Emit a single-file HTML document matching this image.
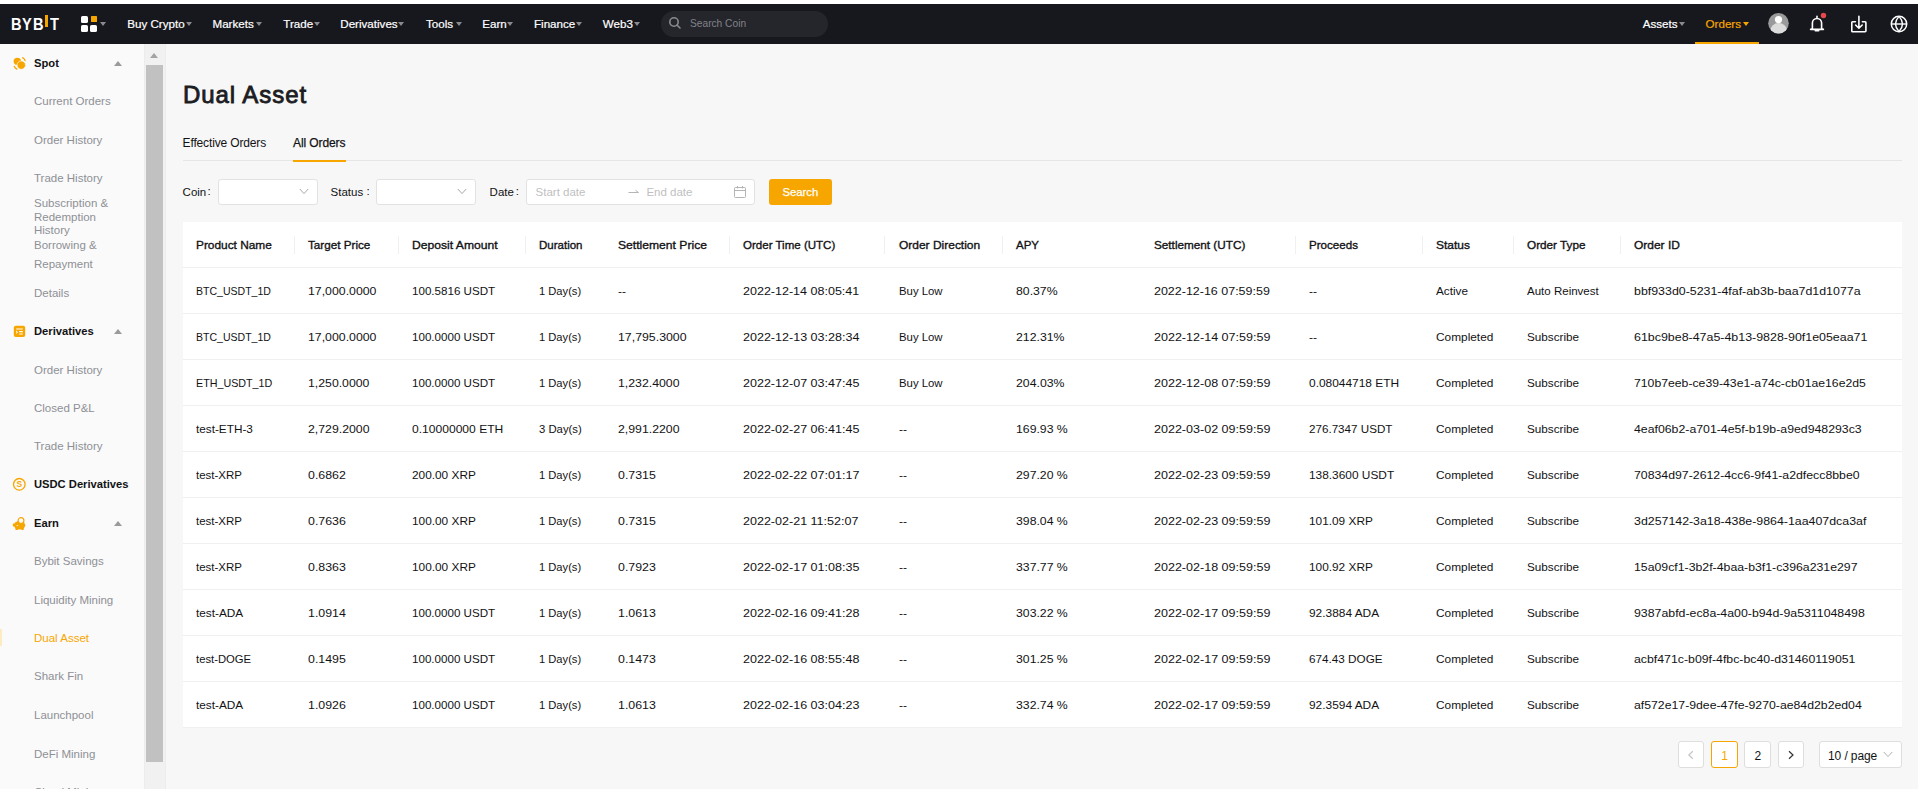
<!DOCTYPE html>
<html><head><meta charset="utf-8">
<style>
*{box-sizing:border-box;margin:0;padding:0}
html,body{width:1918px;height:789px;overflow:hidden;background:#fff;font-family:"Liberation Sans",sans-serif;color:#121214}
.abs{position:absolute;white-space:nowrap}
#hdr{position:absolute;left:0;top:4px;width:1918px;height:40px;background:#17181e}
.nav{position:absolute;top:12.2px;font-size:11.6px;color:#fff;line-height:16px;-webkit-text-stroke:0.2px #fff}
.tri{position:absolute;width:0;height:0;margin-left:-0.2px;border-left:3.3px solid transparent;border-right:3.3px solid transparent;border-top:4.5px solid #8a8b90}
#side{position:absolute;left:0;top:44px;width:144px;height:745px;background:#fafafa;overflow:hidden}
#track{position:absolute;left:144px;top:44px;width:22px;height:745px;background:#f1f1f1;box-shadow:inset 1px 0 0 #ececec, inset -1px 0 0 #ececec}
#thumb{position:absolute;left:146px;top:65px;width:17px;height:697px;background:#c1c1c1}
#main{position:absolute;left:166px;top:44px;width:1752px;height:745px;background:#f7f7f7}
.si{position:absolute;left:34px;font-size:11.5px;color:#8e9096;line-height:14px}
.sh{position:absolute;left:34px;font-size:11.2px;font-weight:700;color:#121214;line-height:14px}
.stri{position:absolute;left:114px;width:0;height:0;border-left:4.5px solid transparent;border-right:4.5px solid transparent;border-bottom:5px solid #9a9a9a}
.lg{top:12.4px;font-size:17px;font-weight:700;color:#fff;line-height:17px;transform:scaleX(0.86);transform-origin:0 0}
.act{color:#f7a600}
.box{background:#fff;border:1px solid #e2e2e2;border-radius:3px}
.th{top:222.8px;font-size:11.8px;line-height:45px;font-weight:400;color:#121214;-webkit-text-stroke:0.35px #121214;transform-origin:0 50%}
.td{font-size:11.2px;line-height:46px;color:#121214;transform-origin:0 50%}
.pg{top:741.4px;height:26.4px;background:#fff;border:1px solid #dedede;border-radius:3px}
</style></head><body>
<div id="hdr">
 <div class="abs lg" style="left:10.9px">B</div><div class="abs lg" style="left:22.4px">Y</div><div class="abs lg" style="left:33px">B</div>
 <div class="abs" style="left:45px;top:11.2px;width:3px;height:12.3px;background:#f7a600"></div>
 <div class="abs lg" style="left:50.2px">T</div>
 <div class="abs" style="left:81.3px;top:12.2px;width:6.9px;height:6.7px;background:#fff;border-radius:1.6px"></div>
 <div class="abs" style="left:90.9px;top:11.7px;width:6.3px;height:6.4px;background:#f7a600;border-radius:0.6px"></div>
 <div class="abs" style="left:81.3px;top:20.7px;width:6.9px;height:6.9px;background:#fff;border-radius:1.6px"></div>
 <div class="abs" style="left:89.8px;top:20.7px;width:6.8px;height:6.9px;background:#fff;border-radius:1.6px"></div>
 <div class="tri" style="left:100.5px;top:18px"></div>
 <div class="nav" style="left:127.3px">Buy Crypto</div><div class="tri" style="left:186.6px;top:18px"></div>
<div class="nav" style="left:212.5px">Markets</div><div class="tri" style="left:256.5px;top:18px"></div>
<div class="nav" style="left:283.3px">Trade</div><div class="tri" style="left:314px;top:18px"></div>
<div class="nav" style="left:340.3px">Derivatives</div><div class="tri" style="left:398.5px;top:18px"></div>
<div class="nav" style="left:426px">Tools</div><div class="tri" style="left:456px;top:18px"></div>
<div class="nav" style="left:482.3px">Earn</div><div class="tri" style="left:507.5px;top:18px"></div>
<div class="nav" style="left:534px">Finance</div><div class="tri" style="left:576.5px;top:18px"></div>
<div class="nav" style="left:602.8px">Web3</div><div class="tri" style="left:634.5px;top:18px"></div>
<div class="nav" style="left:1642.8px">Assets</div><div class="tri" style="left:1679.6px;top:18px"></div>
<div class="nav" style="left:1705.6px;color:#f7a600;-webkit-text-stroke:0.2px #f7a600">Orders</div><div class="tri" style="left:1743px;top:18px;border-top-color:#f7a600"></div>

 <div class="abs" style="left:661px;top:7px;width:167px;height:26px;border-radius:13px;background:#25262c"></div>
 <svg class="abs" style="left:668px;top:12px" width="14" height="14" viewBox="0 0 14 14"><circle cx="6" cy="6" r="4.2" fill="none" stroke="#8a8b90" stroke-width="1.6"/><line x1="9.2" y1="9.2" x2="12" y2="12" stroke="#8a8b90" stroke-width="1.6" stroke-linecap="round"/></svg>
 <div class="abs" style="left:690px;top:13px;font-size:10.2px;color:#81838a;line-height:14px">Search Coin</div>
 <div class="abs" style="left:1695px;top:38px;width:64px;height:2px;background:#f7a600"></div>
 <svg class="abs" style="left:1760px;top:0px" width="158" height="36" viewBox="1760 4 158 36">
  <defs><clipPath id="av"><circle cx="1778.5" cy="23.3" r="10.3"/></clipPath></defs>
  <circle cx="1778.5" cy="23.3" r="10.3" fill="#9a9a9a"/>
  <g clip-path="url(#av)"><ellipse cx="1778.7" cy="31.5" rx="8.6" ry="8.5" fill="#dcdcdc"/></g>
  <circle cx="1778.5" cy="19.6" r="3.6" fill="#fff"/>
  <path d="M1812.4 28.4 V23 a4.6 4.6 0 0 1 9.2 0 V28.4 Q1822 29.2 1823.4 29.4 H1810.6 Q1812 29.2 1812.4 28.4 M1815.3 30.8 h3.4 M1817 16.2 v1.6" fill="none" stroke="#fff" stroke-width="1.6" stroke-linecap="round" stroke-linejoin="round"/>
  <circle cx="1823.5" cy="15.5" r="2.7" fill="#e8484c"/>
  <path d="M1855.4 21.8 H1852.6 a0.8 0.8 0 0 0 -0.8 0.8 V30.9 a0.8 0.8 0 0 0 0.8 0.8 H1865.1 a0.8 0.8 0 0 0 0.8 -0.8 V22.6 a0.8 0.8 0 0 0 -0.8 -0.8 H1862.4 M1858.9 16.2 V28.2 M1855.6 25 L1858.9 28.3 L1862.2 25" fill="none" stroke="#fff" stroke-width="1.6" stroke-linecap="round" stroke-linejoin="round"/>
  <circle cx="1899" cy="24" r="7.7" fill="none" stroke="#fff" stroke-width="1.5"/>
  <path d="M1899 16.4 Q1892 24 1899 31.6 Q1906 24 1899 16.4" fill="none" stroke="#fff" stroke-width="1.4" stroke-linejoin="round"/>
  <path d="M1891.4 24 H1906.6" stroke="#fff" stroke-width="1.4"/>
 </svg>
</div>
<div id="side">
<div class="si" style="top:50.0px">Current Orders</div>
<div class="si" style="top:89.0px">Order History</div>
<div class="si" style="top:127.3px">Trade History</div>
<div class="si" style="top:152.0px">Subscription &amp;</div>
<div class="si" style="top:165.9px">Redemption</div>
<div class="si" style="top:179.2px">History</div>
<div class="si" style="top:193.8px">Borrowing &amp;</div>
<div class="si" style="top:212.9px">Repayment</div>
<div class="si" style="top:241.6px">Details</div>
<div class="si" style="top:319.3px">Order History</div>
<div class="si" style="top:357.3px">Closed P&amp;L</div>
<div class="si" style="top:395.2px">Trade History</div>
<div class="si" style="top:510.0px">Bybit Savings</div>
<div class="si" style="top:548.6px">Liquidity Mining</div>
<div class="si act" style="top:587.0px">Dual Asset</div>
<div class="si" style="top:625.3px">Shark Fin</div>
<div class="si" style="top:664.1px">Launchpool</div>
<div class="si" style="top:702.5px">DeFi Mining</div>
<div class="si" style="top:741.0px">Cloud Mining</div>
<div class="sh" style="top:11.8px">Spot</div>
<div class="sh" style="top:280.1px">Derivatives</div>
<div class="sh" style="top:433.2px">USDC Derivatives</div>
<div class="sh" style="top:472.1px">Earn</div>
<div class="stri" style="top:16.5px"></div>
<div class="stri" style="top:285px"></div>
<div class="stri" style="top:476.5px"></div>
<div style="position:absolute;left:0;top:585px;width:2px;height:17px;background:#fdebc4"></div>
<svg style="position:absolute;left:12px;top:11px" width="16" height="16" viewBox="0 0 16 16"><circle cx="5.35" cy="6.35" r="3.7" fill="#f7a600"/><circle cx="9.3" cy="10.15" r="4.2" fill="#f7a600" stroke="#fafafa" stroke-width="0.7"/><path d="M10.6 2.7 A4.6 4.6 0 0 1 13.1 5.7" fill="none" stroke="#f7a600" stroke-width="1.3" stroke-linecap="round"/><path d="M2.3 11.3 A4.6 4.6 0 0 0 4.9 14.1" fill="none" stroke="#f7a600" stroke-width="1.3" stroke-linecap="round"/></svg>
<svg style="position:absolute;left:13px;top:281px" width="14" height="14" viewBox="0 0 14 14"><rect x="0.8" y="0.8" width="11.4" height="11.2" rx="2" fill="#f7a600"/><path d="M3.2 4 H9.8 M6.2 6.6 H9.8 M6.2 9 H9.8" stroke="#fff" stroke-width="1.1"/><path d="M3 6 L4.6 7.2 L3 8.4" fill="none" stroke="#fff" stroke-width="1"/></svg>
<svg style="position:absolute;left:12px;top:433px" width="15" height="15" viewBox="0 0 15 15"><circle cx="7.3" cy="7.3" r="5.8" fill="none" stroke="#f7a600" stroke-width="1.3"/><text x="7.3" y="10.4" text-anchor="middle" font-family="Liberation Sans" font-weight="700" font-size="8.4" fill="#f7a600">S</text></svg>
<svg style="position:absolute;left:12px;top:472px" width="15" height="16" viewBox="0 0 15 16"><ellipse cx="7.6" cy="9.2" rx="5.6" ry="4.3" fill="#f7a600"/><rect x="0.8" y="7.6" width="2.4" height="3" rx="0.8" fill="#f7a600"/><rect x="3.4" y="11.5" width="2.6" height="2.4" rx="0.6" fill="#f7a600"/><rect x="9.2" y="11.5" width="2.6" height="2.4" rx="0.6" fill="#f7a600"/><circle cx="9" cy="4.6" r="2.9" fill="#fafafa" stroke="#f7a600" stroke-width="1.2"/><path d="M4.6 9.6 h1.6" stroke="#fff" stroke-width="0.8"/></svg>
</div>
<div id="track"></div>
<div id="thumb"></div>
<div id="main"></div>
<!--MAIN-->
<div class="abs" style="left:182.9px;top:82.6px;font-size:24px;line-height:24px;font-weight:400;letter-spacing:0.95px;color:#1c1d22;-webkit-text-stroke:0.85px #1c1d22">Dual Asset</div>
<div class="abs" style="left:182.6px;top:136.2px;font-size:12px;line-height:14px;letter-spacing:-0.15px;color:#121214">Effective Orders</div>
<div class="abs" style="left:293px;top:136.2px;font-size:12px;line-height:14px;letter-spacing:-0.1px;color:#121214;-webkit-text-stroke:0.25px #121214">All Orders</div>
<div class="abs" style="left:183px;top:160px;width:1719px;height:1px;background:#e6e6e6"></div>
<div class="abs" style="left:293px;top:159.6px;width:53px;height:2.2px;background:#f7a600"></div>
<div class="abs" style="left:182.6px;top:185px;font-size:11.5px;line-height:14px;color:#121214">Coin</div><div class="abs" style="left:207.6px;top:184.4px;font-size:11.5px;line-height:14px;color:#121214">:</div>
<div class="abs" style="left:330.6px;top:185px;font-size:11.5px;line-height:14px;color:#121214">Status</div><div class="abs" style="left:366.4px;top:184.4px;font-size:11.5px;line-height:14px;color:#121214">:</div>
<div class="abs" style="left:489.6px;top:185px;font-size:11.5px;line-height:14px;color:#121214">Date</div><div class="abs" style="left:515.8px;top:184.4px;font-size:11.5px;line-height:14px;color:#121214">:</div>
<div class="abs box" style="left:218.4px;top:179.2px;width:99.4px;height:25.8px"></div><svg class="abs" style="left:299px;top:188.4px" width="10" height="7" viewBox="0 0 10 7"><path d="M0.8 1 L5 5.6 L9.2 1" fill="none" stroke="#a8a8a8" stroke-width="1"/></svg>
<div class="abs box" style="left:376.4px;top:179.2px;width:99.4px;height:25.8px"></div><svg class="abs" style="left:457px;top:188.4px" width="10" height="7" viewBox="0 0 10 7"><path d="M0.8 1 L5 5.6 L9.2 1" fill="none" stroke="#a8a8a8" stroke-width="1"/></svg>
<div class="abs box" style="left:526.3px;top:179.3px;width:229.2px;height:26.2px"></div>
<div class="abs" style="left:535.6px;top:185px;font-size:11.5px;line-height:14px;color:#bfbfbf">Start date</div><div class="abs" style="left:646.4px;top:185px;font-size:11.5px;line-height:14px;color:#bfbfbf">End date</div>
<svg class="abs" style="left:627px;top:187px" width="13" height="8" viewBox="0 0 13 8"><path d="M1.5 5.5 H11.5 L8.6 3.4" fill="none" stroke="#b5b5b5" stroke-width="1"/></svg>
<svg class="abs" style="left:733px;top:185px" width="14" height="14" viewBox="0 0 14 14"><rect x="1.5" y="2.5" width="11" height="10" rx="0.8" fill="none" stroke="#b5b5b5" stroke-width="1"/><path d="M1.5 5.5 H12.5 M4.5 1 V3.5 M9.5 1 V3.5" stroke="#b5b5b5" stroke-width="1"/></svg>
<div class="abs" style="left:769px;top:179px;width:63px;height:26px;background:#f7a600;border-radius:3px"></div>
<div class="abs" style="left:782.4px;top:185px;font-size:11.3px;line-height:14px;color:#fff;-webkit-text-stroke:0.25px #fff">Search</div>
<div class="abs" style="left:183px;top:222px;width:1719px;height:505px;background:#fff"></div>
<div class="abs" style="left:183px;top:267px;width:1719px;height:1px;background:#f0f0f0"></div>
<div class="abs" style="left:183px;top:313px;width:1719px;height:1px;background:#f0f0f0"></div>
<div class="abs" style="left:183px;top:359px;width:1719px;height:1px;background:#f0f0f0"></div>
<div class="abs" style="left:183px;top:405px;width:1719px;height:1px;background:#f0f0f0"></div>
<div class="abs" style="left:183px;top:451px;width:1719px;height:1px;background:#f0f0f0"></div>
<div class="abs" style="left:183px;top:497px;width:1719px;height:1px;background:#f0f0f0"></div>
<div class="abs" style="left:183px;top:543px;width:1719px;height:1px;background:#f0f0f0"></div>
<div class="abs" style="left:183px;top:589px;width:1719px;height:1px;background:#f0f0f0"></div>
<div class="abs" style="left:183px;top:635px;width:1719px;height:1px;background:#f0f0f0"></div>
<div class="abs" style="left:183px;top:681px;width:1719px;height:1px;background:#f0f0f0"></div>
<div class="abs" style="left:183px;top:727px;width:1719px;height:1px;background:#f0f0f0"></div>
<div class="abs" style="left:294.0px;top:236px;width:1px;height:18px;background:#f0f0f0"></div>
<div class="abs" style="left:398.0px;top:236px;width:1px;height:18px;background:#f0f0f0"></div>
<div class="abs" style="left:525.0px;top:236px;width:1px;height:18px;background:#f0f0f0"></div>
<div class="abs" style="left:729.0px;top:236px;width:1px;height:18px;background:#f0f0f0"></div>
<div class="abs" style="left:884.0px;top:236px;width:1px;height:18px;background:#f0f0f0"></div>
<div class="abs" style="left:1002.0px;top:236px;width:1px;height:18px;background:#f0f0f0"></div>
<div class="abs" style="left:1295.0px;top:236px;width:1px;height:18px;background:#f0f0f0"></div>
<div class="abs" style="left:1422.0px;top:236px;width:1px;height:18px;background:#f0f0f0"></div>
<div class="abs" style="left:1513.0px;top:236px;width:1px;height:18px;background:#f0f0f0"></div>
<div class="abs" style="left:1620.0px;top:236px;width:1px;height:18px;background:#f0f0f0"></div>
<div class="abs th" style="left:196.2px;transform:scaleX(1.006)">Product Name</div>
<div class="abs th" style="left:308.4px;transform:scaleX(0.991)">Target Price</div>
<div class="abs th" style="left:412.09999999999997px;transform:scaleX(1.028)">Deposit Amount</div>
<div class="abs th" style="left:539.1px;transform:scaleX(0.975)">Duration</div>
<div class="abs th" style="left:617.7px;transform:scaleX(1.028)">Settlement Price</div>
<div class="abs th" style="left:743.1px;transform:scaleX(0.978)">Order Time (UTC)</div>
<div class="abs th" style="left:898.8000000000001px;transform:scaleX(1.015)">Order Direction</div>
<div class="abs th" style="left:1016.1px;transform:scaleX(0.975)">APY</div>
<div class="abs th" style="left:1154.0px;transform:scaleX(0.995)">Settlement (UTC)</div>
<div class="abs th" style="left:1309.1000000000001px;transform:scaleX(0.983)">Proceeds</div>
<div class="abs th" style="left:1435.6000000000001px;transform:scaleX(1.016)">Status</div>
<div class="abs th" style="left:1526.9px;transform:scaleX(0.996)">Order Type</div>
<div class="abs th" style="left:1633.8px;transform:scaleX(1.015)">Order ID</div>
<div class="abs td" style="left:196.1px;top:268.0px;transform:scaleX(0.941)">BTC_USDT_1D</div>
<div class="abs td" style="left:308.3px;top:268.0px;transform:scaleX(1.100)">17,000.0000</div>
<div class="abs td" style="left:412.0px;top:268.0px;transform:scaleX(1.037)">100.5816 USDT</div>
<div class="abs td" style="left:539.0px;top:268.0px;transform:scaleX(0.997)">1 Day(s)</div>
<div class="abs td" style="left:617.6px;top:268.0px;transform:scaleX(1.071)">--</div>
<div class="abs td" style="left:743.0px;top:268.0px;transform:scaleX(1.119)">2022-12-14 08:05:41</div>
<div class="abs td" style="left:898.7px;top:268.0px;transform:scaleX(1.015)">Buy Low</div>
<div class="abs td" style="left:1016.0px;top:268.0px;transform:scaleX(1.095)">80.37%</div>
<div class="abs td" style="left:1153.8999999999999px;top:268.0px;transform:scaleX(1.115)">2022-12-16 07:59:59</div>
<div class="abs td" style="left:1309.0px;top:268.0px;transform:scaleX(1.071)">--</div>
<div class="abs td" style="left:1435.5px;top:268.0px;transform:scaleX(1.049)">Active</div>
<div class="abs td" style="left:1526.8px;top:268.0px;transform:scaleX(1.030)">Auto Reinvest</div>
<div class="abs td" style="left:1633.6999999999998px;top:268.0px;transform:scaleX(1.107)">bbf933d0-5231-4faf-ab3b-baa7d1d1077a</div>
<div class="abs td" style="left:196.1px;top:314.0px;transform:scaleX(0.941)">BTC_USDT_1D</div>
<div class="abs td" style="left:308.3px;top:314.0px;transform:scaleX(1.100)">17,000.0000</div>
<div class="abs td" style="left:412.0px;top:314.0px;transform:scaleX(1.037)">100.0000 USDT</div>
<div class="abs td" style="left:539.0px;top:314.0px;transform:scaleX(0.997)">1 Day(s)</div>
<div class="abs td" style="left:617.6px;top:314.0px;transform:scaleX(1.102)">17,795.3000</div>
<div class="abs td" style="left:743.0px;top:314.0px;transform:scaleX(1.120)">2022-12-13 03:28:34</div>
<div class="abs td" style="left:898.7px;top:314.0px;transform:scaleX(1.015)">Buy Low</div>
<div class="abs td" style="left:1016.0px;top:314.0px;transform:scaleX(1.097)">212.31%</div>
<div class="abs td" style="left:1153.8999999999999px;top:314.0px;transform:scaleX(1.120)">2022-12-14 07:59:59</div>
<div class="abs td" style="left:1309.0px;top:314.0px;transform:scaleX(1.071)">--</div>
<div class="abs td" style="left:1435.5px;top:314.0px;transform:scaleX(1.060)">Completed</div>
<div class="abs td" style="left:1526.8px;top:314.0px;transform:scaleX(1.048)">Subscribe</div>
<div class="abs td" style="left:1633.6999999999998px;top:314.0px;transform:scaleX(1.110)">61bc9be8-47a5-4b13-9828-90f1e05eaa71</div>
<div class="abs td" style="left:196.1px;top:360.0px;transform:scaleX(0.958)">ETH_USDT_1D</div>
<div class="abs td" style="left:308.3px;top:360.0px;transform:scaleX(1.097)">1,250.0000</div>
<div class="abs td" style="left:412.0px;top:360.0px;transform:scaleX(1.037)">100.0000 USDT</div>
<div class="abs td" style="left:539.0px;top:360.0px;transform:scaleX(0.997)">1 Day(s)</div>
<div class="abs td" style="left:617.6px;top:360.0px;transform:scaleX(1.099)">1,232.4000</div>
<div class="abs td" style="left:743.0px;top:360.0px;transform:scaleX(1.120)">2022-12-07 03:47:45</div>
<div class="abs td" style="left:898.7px;top:360.0px;transform:scaleX(1.015)">Buy Low</div>
<div class="abs td" style="left:1016.0px;top:360.0px;transform:scaleX(1.097)">204.03%</div>
<div class="abs td" style="left:1153.8999999999999px;top:360.0px;transform:scaleX(1.120)">2022-12-08 07:59:59</div>
<div class="abs td" style="left:1309.0px;top:360.0px;transform:scaleX(1.066)">0.08044718 ETH</div>
<div class="abs td" style="left:1435.5px;top:360.0px;transform:scaleX(1.060)">Completed</div>
<div class="abs td" style="left:1526.8px;top:360.0px;transform:scaleX(1.048)">Subscribe</div>
<div class="abs td" style="left:1633.6999999999998px;top:360.0px;transform:scaleX(1.093)">710b7eeb-ce39-43e1-a74c-cb01ae16e2d5</div>
<div class="abs td" style="left:196.1px;top:406.0px;transform:scaleX(1.051)">test-ETH-3</div>
<div class="abs td" style="left:308.3px;top:406.0px;transform:scaleX(1.099)">2,729.2000</div>
<div class="abs td" style="left:412.0px;top:406.0px;transform:scaleX(1.079)">0.10000000 ETH</div>
<div class="abs td" style="left:539.0px;top:406.0px;transform:scaleX(1.012)">3 Day(s)</div>
<div class="abs td" style="left:617.6px;top:406.0px;transform:scaleX(1.099)">2,991.2200</div>
<div class="abs td" style="left:743.0px;top:406.0px;transform:scaleX(1.120)">2022-02-27 06:41:45</div>
<div class="abs td" style="left:898.7px;top:406.0px;transform:scaleX(1.071)">--</div>
<div class="abs td" style="left:1016.0px;top:406.0px;transform:scaleX(1.095)">169.93 %</div>
<div class="abs td" style="left:1153.8999999999999px;top:406.0px;transform:scaleX(1.120)">2022-03-02 09:59:59</div>
<div class="abs td" style="left:1309.0px;top:406.0px;transform:scaleX(1.040)">276.7347 USDT</div>
<div class="abs td" style="left:1435.5px;top:406.0px;transform:scaleX(1.060)">Completed</div>
<div class="abs td" style="left:1526.8px;top:406.0px;transform:scaleX(1.048)">Subscribe</div>
<div class="abs td" style="left:1633.6999999999998px;top:406.0px;transform:scaleX(1.099)">4eaf06b2-a701-4e5f-b19b-a9ed948293c3</div>
<div class="abs td" style="left:196.1px;top:452.0px;transform:scaleX(1.026)">test-XRP</div>
<div class="abs td" style="left:308.3px;top:452.0px;transform:scaleX(1.105)">0.6862</div>
<div class="abs td" style="left:412.0px;top:452.0px;transform:scaleX(1.058)">200.00 XRP</div>
<div class="abs td" style="left:539.0px;top:452.0px;transform:scaleX(0.997)">1 Day(s)</div>
<div class="abs td" style="left:617.6px;top:452.0px;transform:scaleX(1.105)">0.7315</div>
<div class="abs td" style="left:743.0px;top:452.0px;transform:scaleX(1.120)">2022-02-22 07:01:17</div>
<div class="abs td" style="left:898.7px;top:452.0px;transform:scaleX(1.071)">--</div>
<div class="abs td" style="left:1016.0px;top:452.0px;transform:scaleX(1.095)">297.20 %</div>
<div class="abs td" style="left:1153.8999999999999px;top:452.0px;transform:scaleX(1.120)">2022-02-23 09:59:59</div>
<div class="abs td" style="left:1309.0px;top:452.0px;transform:scaleX(1.062)">138.3600 USDT</div>
<div class="abs td" style="left:1435.5px;top:452.0px;transform:scaleX(1.060)">Completed</div>
<div class="abs td" style="left:1526.8px;top:452.0px;transform:scaleX(1.048)">Subscribe</div>
<div class="abs td" style="left:1633.6999999999998px;top:452.0px;transform:scaleX(1.099)">70834d97-2612-4cc6-9f41-a2dfecc8bbe0</div>
<div class="abs td" style="left:196.1px;top:498.0px;transform:scaleX(1.026)">test-XRP</div>
<div class="abs td" style="left:308.3px;top:498.0px;transform:scaleX(1.105)">0.7636</div>
<div class="abs td" style="left:412.0px;top:498.0px;transform:scaleX(1.058)">100.00 XRP</div>
<div class="abs td" style="left:539.0px;top:498.0px;transform:scaleX(0.997)">1 Day(s)</div>
<div class="abs td" style="left:617.6px;top:498.0px;transform:scaleX(1.105)">0.7315</div>
<div class="abs td" style="left:743.0px;top:498.0px;transform:scaleX(1.120)">2022-02-21 11:52:07</div>
<div class="abs td" style="left:898.7px;top:498.0px;transform:scaleX(1.071)">--</div>
<div class="abs td" style="left:1016.0px;top:498.0px;transform:scaleX(1.095)">398.04 %</div>
<div class="abs td" style="left:1153.8999999999999px;top:498.0px;transform:scaleX(1.120)">2022-02-23 09:59:59</div>
<div class="abs td" style="left:1309.0px;top:498.0px;transform:scaleX(1.058)">101.09 XRP</div>
<div class="abs td" style="left:1435.5px;top:498.0px;transform:scaleX(1.060)">Completed</div>
<div class="abs td" style="left:1526.8px;top:498.0px;transform:scaleX(1.048)">Subscribe</div>
<div class="abs td" style="left:1633.6999999999998px;top:498.0px;transform:scaleX(1.105)">3d257142-3a18-438e-9864-1aa407dca3af</div>
<div class="abs td" style="left:196.1px;top:544.0px;transform:scaleX(1.026)">test-XRP</div>
<div class="abs td" style="left:308.3px;top:544.0px;transform:scaleX(1.105)">0.8363</div>
<div class="abs td" style="left:412.0px;top:544.0px;transform:scaleX(1.058)">100.00 XRP</div>
<div class="abs td" style="left:539.0px;top:544.0px;transform:scaleX(0.997)">1 Day(s)</div>
<div class="abs td" style="left:617.6px;top:544.0px;transform:scaleX(1.105)">0.7923</div>
<div class="abs td" style="left:743.0px;top:544.0px;transform:scaleX(1.120)">2022-02-17 01:08:35</div>
<div class="abs td" style="left:898.7px;top:544.0px;transform:scaleX(1.071)">--</div>
<div class="abs td" style="left:1016.0px;top:544.0px;transform:scaleX(1.095)">337.77 %</div>
<div class="abs td" style="left:1153.8999999999999px;top:544.0px;transform:scaleX(1.120)">2022-02-18 09:59:59</div>
<div class="abs td" style="left:1309.0px;top:544.0px;transform:scaleX(1.058)">100.92 XRP</div>
<div class="abs td" style="left:1435.5px;top:544.0px;transform:scaleX(1.060)">Completed</div>
<div class="abs td" style="left:1526.8px;top:544.0px;transform:scaleX(1.048)">Subscribe</div>
<div class="abs td" style="left:1633.6999999999998px;top:544.0px;transform:scaleX(1.099)">15a09cf1-3b2f-4baa-b3f1-c396a231e297</div>
<div class="abs td" style="left:196.1px;top:590.0px;transform:scaleX(1.055)">test-ADA</div>
<div class="abs td" style="left:308.3px;top:590.0px;transform:scaleX(1.105)">1.0914</div>
<div class="abs td" style="left:412.0px;top:590.0px;transform:scaleX(1.037)">100.0000 USDT</div>
<div class="abs td" style="left:539.0px;top:590.0px;transform:scaleX(0.997)">1 Day(s)</div>
<div class="abs td" style="left:617.6px;top:590.0px;transform:scaleX(1.105)">1.0613</div>
<div class="abs td" style="left:743.0px;top:590.0px;transform:scaleX(1.120)">2022-02-16 09:41:28</div>
<div class="abs td" style="left:898.7px;top:590.0px;transform:scaleX(1.071)">--</div>
<div class="abs td" style="left:1016.0px;top:590.0px;transform:scaleX(1.095)">303.22 %</div>
<div class="abs td" style="left:1153.8999999999999px;top:590.0px;transform:scaleX(1.120)">2022-02-17 09:59:59</div>
<div class="abs td" style="left:1309.0px;top:590.0px;transform:scaleX(1.064)">92.3884 ADA</div>
<div class="abs td" style="left:1435.5px;top:590.0px;transform:scaleX(1.060)">Completed</div>
<div class="abs td" style="left:1526.8px;top:590.0px;transform:scaleX(1.048)">Subscribe</div>
<div class="abs td" style="left:1633.6999999999998px;top:590.0px;transform:scaleX(1.102)">9387abfd-ec8a-4a00-b94d-9a5311048498</div>
<div class="abs td" style="left:196.1px;top:636.0px;transform:scaleX(1.008)">test-DOGE</div>
<div class="abs td" style="left:308.3px;top:636.0px;transform:scaleX(1.105)">0.1495</div>
<div class="abs td" style="left:412.0px;top:636.0px;transform:scaleX(1.037)">100.0000 USDT</div>
<div class="abs td" style="left:539.0px;top:636.0px;transform:scaleX(0.997)">1 Day(s)</div>
<div class="abs td" style="left:617.6px;top:636.0px;transform:scaleX(1.105)">0.1473</div>
<div class="abs td" style="left:743.0px;top:636.0px;transform:scaleX(1.120)">2022-02-16 08:55:48</div>
<div class="abs td" style="left:898.7px;top:636.0px;transform:scaleX(1.071)">--</div>
<div class="abs td" style="left:1016.0px;top:636.0px;transform:scaleX(1.095)">301.25 %</div>
<div class="abs td" style="left:1153.8999999999999px;top:636.0px;transform:scaleX(1.120)">2022-02-17 09:59:59</div>
<div class="abs td" style="left:1309.0px;top:636.0px;transform:scaleX(1.047)">674.43 DOGE</div>
<div class="abs td" style="left:1435.5px;top:636.0px;transform:scaleX(1.060)">Completed</div>
<div class="abs td" style="left:1526.8px;top:636.0px;transform:scaleX(1.048)">Subscribe</div>
<div class="abs td" style="left:1633.6999999999998px;top:636.0px;transform:scaleX(1.100)">acbf471c-b09f-4fbc-bc40-d31460119051</div>
<div class="abs td" style="left:196.1px;top:682.0px;transform:scaleX(1.055)">test-ADA</div>
<div class="abs td" style="left:308.3px;top:682.0px;transform:scaleX(1.105)">1.0926</div>
<div class="abs td" style="left:412.0px;top:682.0px;transform:scaleX(1.037)">100.0000 USDT</div>
<div class="abs td" style="left:539.0px;top:682.0px;transform:scaleX(0.997)">1 Day(s)</div>
<div class="abs td" style="left:617.6px;top:682.0px;transform:scaleX(1.105)">1.0613</div>
<div class="abs td" style="left:743.0px;top:682.0px;transform:scaleX(1.120)">2022-02-16 03:04:23</div>
<div class="abs td" style="left:898.7px;top:682.0px;transform:scaleX(1.071)">--</div>
<div class="abs td" style="left:1016.0px;top:682.0px;transform:scaleX(1.095)">332.74 %</div>
<div class="abs td" style="left:1153.8999999999999px;top:682.0px;transform:scaleX(1.120)">2022-02-17 09:59:59</div>
<div class="abs td" style="left:1309.0px;top:682.0px;transform:scaleX(1.064)">92.3594 ADA</div>
<div class="abs td" style="left:1435.5px;top:682.0px;transform:scaleX(1.060)">Completed</div>
<div class="abs td" style="left:1526.8px;top:682.0px;transform:scaleX(1.048)">Subscribe</div>
<div class="abs td" style="left:1633.6999999999998px;top:682.0px;transform:scaleX(1.096)">af572e17-9dee-47fe-9270-ae84d2b2ed04</div>
<div class="abs pg" style="left:1678.4px;width:25.4px"></div>
<div class="abs pg" style="left:1711.1px;width:26.6px;border-color:#f7a600"></div>
<div class="abs pg" style="left:1744.3px;width:26.3px"></div>
<div class="abs pg" style="left:1778.4px;width:25.3px"></div>
<div class="abs pg" style="left:1818.5px;width:83.2px"></div>
<svg class="abs" style="left:1685px;top:748.6px" width="12" height="12" viewBox="0 0 12 12"><path d="M7.8 2.2 L3.8 6 L7.8 9.8" fill="none" stroke="#c5c5c5" stroke-width="1.2"/></svg>
<svg class="abs" style="left:1785px;top:748.8px" width="12" height="12" viewBox="0 0 12 12"><path d="M4 2.2 L8 6 L4 9.8" fill="none" stroke="#333" stroke-width="1.2"/></svg>
<div class="abs" style="left:1721.2px;top:748.6px;font-size:12px;line-height:14px;color:#f7a600">1</div>
<div class="abs" style="left:1754.6px;top:748.6px;font-size:12px;line-height:14px;color:#121214">2</div>
<div class="abs" style="left:1828px;top:748.6px;font-size:12px;line-height:14px;color:#121214;letter-spacing:-0.1px">10 / page</div>
<svg class="abs" style="left:1883px;top:751px" width="10" height="7" viewBox="0 0 10 7"><path d="M0.8 1 L5 5.6 L9.2 1" fill="none" stroke="#b0b0b0" stroke-width="1"/></svg>
<div class="abs" style="left:150px;top:53px;width:0;height:0;border-left:4.7px solid transparent;border-right:4.7px solid transparent;border-bottom:5.2px solid #a3a3a3"></div>
<!--/MAIN-->
</body></html>
